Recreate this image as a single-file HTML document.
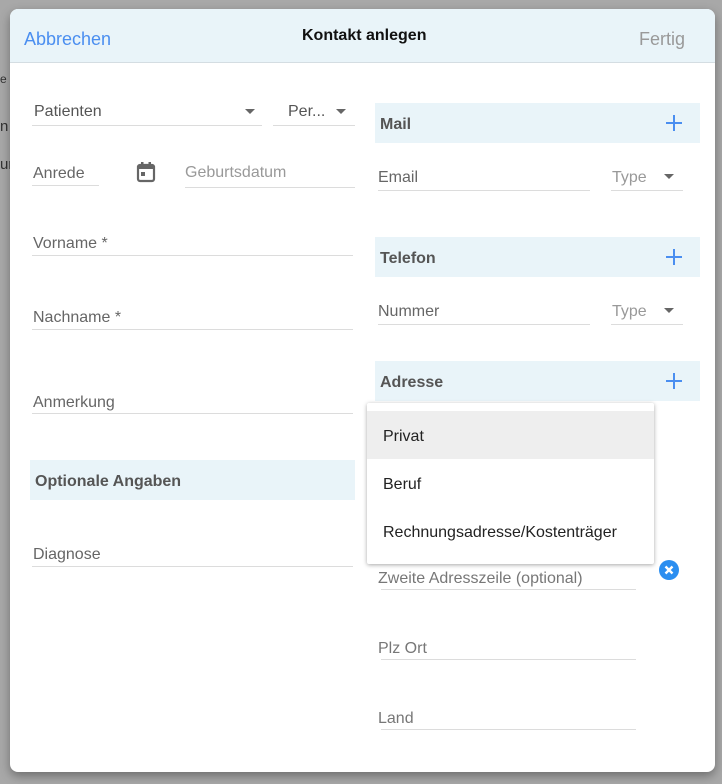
<!DOCTYPE html>
<html><head><meta charset="utf-8"><style>
*{margin:0;padding:0;box-sizing:border-box}
body{width:722px;height:784px;background:#a8a8a8;font-family:"Liberation Sans",sans-serif;position:relative;overflow:hidden}
.bgt{position:absolute;left:0;color:#333;font-size:15px}
.dlg{position:absolute;left:10px;top:9px;width:705px;height:763px;background:#fff;border-radius:8px;box-shadow:0 4px 10px rgba(0,0,0,.35);overflow:hidden}
.hd{position:absolute;left:0;top:0;width:100%;height:54px;background:#e9f4f9;border-bottom:1px solid #d4dde2}
.a{position:absolute;white-space:nowrap}
.ph{color:#8a8a8a;font-size:16px;margin-top:2px}
.ln{position:absolute;height:1px;background:#dcdcdc}
.sec{position:absolute;background:#e9f4f9;height:40px;left:365px;width:325px}
.sec b{position:absolute;left:5px;top:13px;font-size:16px;color:#555}
.plus{position:absolute;right:18px;top:12px;width:16px;height:16px}
.plus:before{content:"";position:absolute;left:7px;top:0;width:2px;height:16px;background:#4a8ef0}
.plus:after{content:"";position:absolute;top:7px;left:0;height:2px;width:16px;background:#4a8ef0}
.tri{position:absolute;width:0;height:0;border-left:5px solid transparent;border-right:5px solid transparent;border-top:5px solid #666}
</style></head><body>
<div class="bgt" style="top:72px;font-size:12px">e</div>
<div class="bgt" style="top:118px">n</div>
<div class="bgt" style="top:156px">ur</div>
<div class="dlg">
<div class="hd">
<div class="a" style="left:14px;top:20px;color:#4a8ef0;font-size:18px">Abbrechen</div>
<div class="a" style="left:292px;top:18px;color:#111;font-size:16px;font-weight:bold">Kontakt anlegen</div>
<div class="a" style="left:629px;top:20px;color:#999;font-size:18px">Fertig</div>
</div>
<div class="a" style="left:24px;top:94px;color:#555;font-size:16px">Patienten</div>
<div class="tri" style="left:235px;top:100px"></div>
<div class="ln" style="left:22px;top:116px;width:230px"></div>
<div class="a" style="left:278px;top:94px;color:#555;font-size:16px">Per...</div>
<div class="tri" style="left:326px;top:100px"></div>
<div class="ln" style="left:263px;top:116px;width:82px"></div>

<div class="a ph" style="left:23px;top:154px;color:#666">Anrede</div>
<div class="ln" style="left:22px;top:176px;width:67px"></div>
<svg class="a" style="left:126px;top:152px" width="20" height="22" viewBox="0 0 20 22"><rect x="2" y="4" width="16" height="16" rx="2" fill="none" stroke="#666" stroke-width="2.2"/><rect x="2" y="4" width="16" height="4" fill="#666"/><rect x="5" y="1" width="2.5" height="4" fill="#666"/><rect x="12.5" y="1" width="2.5" height="4" fill="#666"/><rect x="5" y="11" width="4" height="4" fill="#666"/></svg>
<div class="a ph" style="left:175px;top:153px;color:#999">Geburtsdatum</div>
<div class="ln" style="left:175px;top:178px;width:170px"></div>

<div class="a ph" style="left:23px;top:224px;color:#666">Vorname *</div>
<div class="ln" style="left:22px;top:246px;width:321px"></div>
<div class="a ph" style="left:23px;top:298px;color:#666">Nachname *</div>
<div class="ln" style="left:22px;top:320px;width:321px"></div>
<div class="a ph" style="left:23px;top:383px;color:#666">Anmerkung</div>
<div class="ln" style="left:22px;top:404px;width:321px"></div>

<div class="a" style="left:20px;top:451px;width:325px;height:40px;background:#e9f4f9"><b style="position:absolute;left:5px;top:13px;font-size:16px;color:#555">Optionale Angaben</b></div>
<div class="a ph" style="left:23px;top:535px;color:#666">Diagnose</div>
<div class="ln" style="left:22px;top:557px;width:321px"></div>

<div class="sec" style="top:94px"><b>Mail</b><div class="plus"></div></div>
<div class="a ph" style="left:368px;top:158px;color:#666">Email</div>
<div class="ln" style="left:368px;top:181px;width:212px"></div>
<div class="a ph" style="left:602px;top:158px;color:#999">Type</div>
<div class="tri" style="left:654px;top:165px"></div>
<div class="ln" style="left:601px;top:181px;width:72px"></div>

<div class="sec" style="top:228px"><b>Telefon</b><div class="plus"></div></div>
<div class="a ph" style="left:368px;top:292px;color:#666">Nummer</div>
<div class="ln" style="left:368px;top:315px;width:212px"></div>
<div class="a ph" style="left:602px;top:292px;color:#999">Type</div>
<div class="tri" style="left:654px;top:299px"></div>
<div class="ln" style="left:601px;top:315px;width:72px"></div>

<div class="sec" style="top:352px"><b>Adresse</b><div class="plus"></div></div>

<div class="a ph" style="left:368px;top:559px;color:#777">Zweite Adresszeile (optional)</div>
<div class="ln" style="left:371px;top:580px;width:255px"></div>
<div class="a" style="left:649px;top:551px;width:20px;height:20px;border-radius:50%;background:#2b8ef0"><svg width="20" height="20"><path d="M6.5 6.5L13.5 13.5M13.5 6.5L6.5 13.5" stroke="#fff" stroke-width="2.4"/></svg></div>
<div class="a ph" style="left:368px;top:629px;color:#777">Plz Ort</div>
<div class="ln" style="left:371px;top:650px;width:255px"></div>
<div class="a ph" style="left:368px;top:699px;color:#777">Land</div>
<div class="ln" style="left:371px;top:720px;width:255px"></div>

<div class="a" style="left:357px;top:394px;width:287px;height:161px;background:#fff;box-shadow:0 1px 4px rgba(0,0,0,.35);border-radius:2px">
<div class="a" style="left:0;top:8px;width:100%;height:48px;background:#eee"></div>
<div class="a" style="left:16px;top:25px;font-size:16px;color:#222">Privat</div>
<div class="a" style="left:16px;top:73px;font-size:16px;color:#222">Beruf</div>
<div class="a" style="left:16px;top:121px;font-size:16px;color:#222">Rechnungsadresse/Kostenträger</div>
</div>
</div>
</body></html>
